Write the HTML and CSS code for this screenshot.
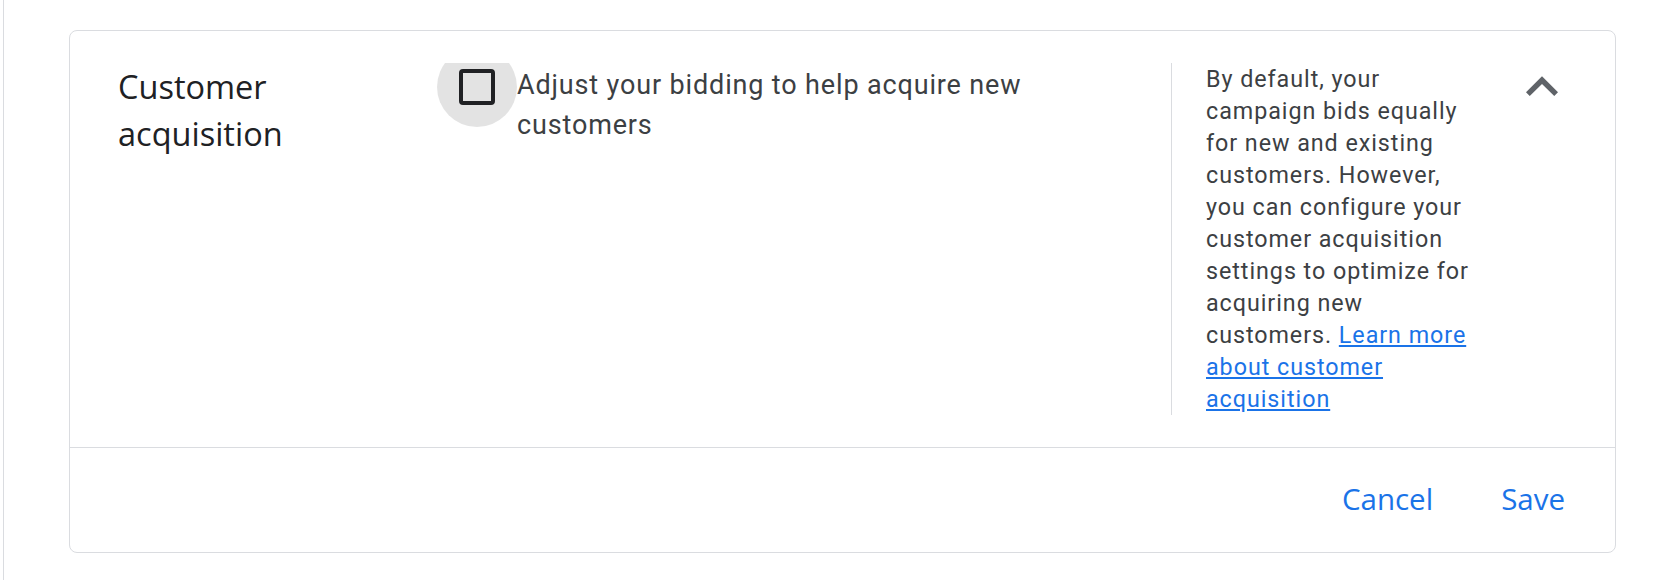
FILE: index.html
```html
<!DOCTYPE html>
<html lang="en">
<head>
    <meta charset="UTF-8">
    <meta name="viewport" content="width=device-width, initial-scale=1.0">
    <title>Customer acquisition</title>
    <link rel="stylesheet" href="styles.css">
</head>
<body>
    <div class="page">
        <section class="panel">
            <div class="panel-row">
                <h2 class="panel-title">Customer acquisition</h2>

                <div class="option">
                    <label class="checkbox">
                        <input type="checkbox">
                        <span class="checkbox-box"></span>
                    </label>
                    <span class="option-text">Adjust your bidding to help acquire new customers</span>
                </div>

                <div class="help">
                    <p>By default, your campaign bids equally for new and existing customers. However, you can configure your customer acquisition settings to optimize for acquiring new customers. <a href="#">Learn more about customer acquisition</a></p>
                </div>

                <button class="collapse" aria-label="Collapse">
                    <svg viewBox="0 0 24 24" width="64" height="64"><path d="M12 8l-6 6 1.41 1.41L12 10.83l4.59 4.58L18 14z"/></svg>
                </button>
            </div>

            <div class="panel-actions">
                <button class="text-button">Cancel</button>
                <button class="text-button">Save</button>
            </div>
        </section>
    </div>
</body>
</html>
```

FILE: styles.css
```css
/* Page */
html, body {
    margin: 0;
    height: 100%;
    background: #fff;
}

.page {
    margin-left: 3px;
    min-height: 100%;
    box-sizing: border-box;
    border-left: 1px solid #dadce0;
    padding: 30px 40px 0 65px;
}

/* Expanded setting panel */
.panel {
    border: 1px solid #dadce0;
    border-radius: 8px;
    background: #fff;
}

.panel-row {
    display: flex;
    align-items: flex-start;
    padding: 32px 41px 32px 48px;
    border-bottom: 1px solid #dadce0;
}

.panel-title {
    width: 319px;
    box-sizing: border-box;
    padding-right: 48px; /* keeps the title on two lines */
    flex-shrink: 0;
    margin: 0;
    font-family: "Open Sans", sans-serif;
    font-size: 32.5px;
    font-weight: 500;
    line-height: 47px;
    color: #202124;
}

.option {
    display: flex;
    align-items: flex-start;
    width: 734px;
    flex-shrink: 0;
    align-self: stretch;
    overflow: hidden; /* clips the top of the hover circle */
}

.checkbox {
    position: relative;
    display: flex;
    align-items: center;
    justify-content: center;
    width: 80px;
    height: 80px;
    margin-top: -16px;
    flex-shrink: 0;
    border-radius: 50%;
    background: rgba(0, 0, 0, 0.11);
    cursor: pointer;
}

.checkbox input {
    position: absolute;
    opacity: 0;
    margin: 0;
}

.checkbox-box {
    width: 36px;
    height: 36px;
    box-sizing: border-box;
    border: 4px solid #202124;
    border-radius: 4px;
}

.option-text {
    max-width: 560px;
    padding-top: 2px;
    font-family: Roboto, sans-serif;
    font-size: 27px;
    line-height: 40px;
    letter-spacing: 0.85px;
    color: #3c4043;
}

.help {
    width: 268px;
    flex-shrink: 0;
    border-left: 1px solid #dadce0;
    padding: 0 36px 0 34px;
}

.help p {
    margin: 0;
    font-family: Roboto, sans-serif;
    font-size: 23.3px;
    line-height: 32px;
    letter-spacing: 0.95px;
    color: #3c4043;
}

.help a {
    color: #1a73e8;
}

.collapse {
    width: 64px;
    height: 64px;
    flex-shrink: 0;
    margin-top: -8px;
    padding: 0;
    border: none;
    background: none;
    cursor: pointer;
}

.collapse svg {
    display: block;
    fill: #5f6368;
}

/* Footer buttons */
.panel-actions {
    display: flex;
    justify-content: flex-end;
    align-items: center;
    gap: 20px;
    height: 104px;
    padding-right: 26px;
}

.text-button {
    padding: 0 24px 3px;
    border: none;
    background: none;
    font-family: "Open Sans", sans-serif;
    font-size: 29.5px;
    font-weight: 500;
    color: #1a73e8;
    cursor: pointer;
}
```
